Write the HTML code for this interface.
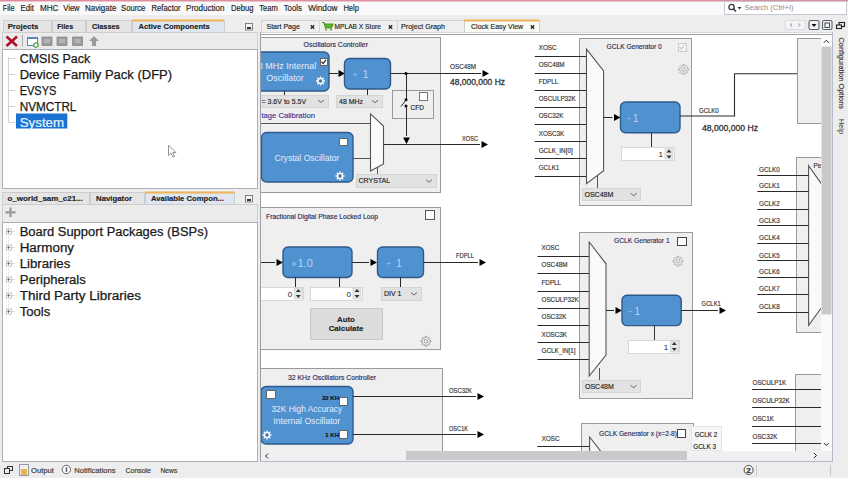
<!DOCTYPE html>
<html><head><meta charset="utf-8">
<style>
*{margin:0;padding:0}
html,body{width:848px;height:478px;overflow:hidden;background:#ededed}
svg{position:absolute;left:0;top:0;display:block}
svg text{font-family:"Liberation Sans", sans-serif}
</style></head><body>
<svg width="848" height="478" viewBox="0 0 848 478">
<rect x="0" y="0" width="848" height="478" fill="#ededed"/>
<rect x="0" y="0" width="848" height="15" fill="#f9f9f9"/>
<rect x="0" y="0" width="848" height="1.5" fill="#dd8fa0"/>
<text x="2.8" y="11" font-size="8.3" fill="#222" stroke="#222" stroke-width="0.15" text-anchor="start" font-weight="normal" textLength="11.7" lengthAdjust="spacingAndGlyphs" >File</text>
<text x="20.6" y="11" font-size="8.3" fill="#222" stroke="#222" stroke-width="0.15" text-anchor="start" font-weight="normal" textLength="13.4" lengthAdjust="spacingAndGlyphs" >Edit</text>
<text x="40" y="11" font-size="8.3" fill="#222" stroke="#222" stroke-width="0.15" text-anchor="start" font-weight="normal" textLength="18.4" lengthAdjust="spacingAndGlyphs" >MHC</text>
<text x="63.3" y="11" font-size="8.3" fill="#222" stroke="#222" stroke-width="0.15" text-anchor="start" font-weight="normal" textLength="16.3" lengthAdjust="spacingAndGlyphs" >View</text>
<text x="85" y="11" font-size="8.3" fill="#222" stroke="#222" stroke-width="0.15" text-anchor="start" font-weight="normal" textLength="31.3" lengthAdjust="spacingAndGlyphs" >Navigate</text>
<text x="121" y="11" font-size="8.3" fill="#222" stroke="#222" stroke-width="0.15" text-anchor="start" font-weight="normal" textLength="24.4" lengthAdjust="spacingAndGlyphs" >Source</text>
<text x="151.4" y="11" font-size="8.3" fill="#222" stroke="#222" stroke-width="0.15" text-anchor="start" font-weight="normal" textLength="29.3" lengthAdjust="spacingAndGlyphs" >Refactor</text>
<text x="186" y="11" font-size="8.3" fill="#222" stroke="#222" stroke-width="0.15" text-anchor="start" font-weight="normal" textLength="38.6" lengthAdjust="spacingAndGlyphs" >Production</text>
<text x="230.9" y="11" font-size="8.3" fill="#222" stroke="#222" stroke-width="0.15" text-anchor="start" font-weight="normal" textLength="22.5" lengthAdjust="spacingAndGlyphs" >Debug</text>
<text x="259.3" y="11" font-size="8.3" fill="#222" stroke="#222" stroke-width="0.15" text-anchor="start" font-weight="normal" textLength="18.5" lengthAdjust="spacingAndGlyphs" >Team</text>
<text x="283.7" y="11" font-size="8.3" fill="#222" stroke="#222" stroke-width="0.15" text-anchor="start" font-weight="normal" textLength="18.3" lengthAdjust="spacingAndGlyphs" >Tools</text>
<text x="308.2" y="11" font-size="8.3" fill="#222" stroke="#222" stroke-width="0.15" text-anchor="start" font-weight="normal" textLength="29.3" lengthAdjust="spacingAndGlyphs" >Window</text>
<text x="343.4" y="11" font-size="8.3" fill="#222" stroke="#222" stroke-width="0.15" text-anchor="start" font-weight="normal" textLength="15.6" lengthAdjust="spacingAndGlyphs" >Help</text>
<rect x="724.5" y="1.5" width="122.0" height="13.0" rx="0" fill="#fff" stroke="#c3c9d2" stroke-width="1" />
<circle cx="731.5" cy="7" r="2.6" fill="none" stroke="#333" stroke-width="1.3"/>
<line x1="733.5" y1="9" x2="736" y2="11.5" stroke="#333" stroke-width="1.5" />
<polygon points="737.5,7 741.5,7 739.5,9.5" fill="#333"/>
<text x="744.5" y="10" font-size="7.5" fill="#888"  text-anchor="start" font-weight="normal" textLength="49" lengthAdjust="spacingAndGlyphs" >Search (Ctrl+I)</text>
<rect x="2.5" y="32.5" width="255.0" height="17.0" rx="0" fill="#ebebeb" stroke="#cfcfcf" stroke-width="1" />
<rect x="3.5" y="20.5" width="48.0" height="12.0" rx="0" fill="#e4e4e4" stroke="#cdcdcd" stroke-width="1" />
<text x="7.7" y="29" font-size="7.8" fill="#222" stroke="#222" stroke-width="0.15" text-anchor="start" font-weight="bold" textLength="30.6" lengthAdjust="spacingAndGlyphs" >Projects</text>
<rect x="52.5" y="20.5" width="33.0" height="12.0" rx="0" fill="#e4e4e4" stroke="#cdcdcd" stroke-width="1" />
<text x="57.2" y="29" font-size="7.8" fill="#222" stroke="#222" stroke-width="0.15" text-anchor="start" font-weight="bold" textLength="16" lengthAdjust="spacingAndGlyphs" >Files</text>
<rect x="86.5" y="20.5" width="45.0" height="12.0" rx="0" fill="#e4e4e4" stroke="#cdcdcd" stroke-width="1" />
<text x="92" y="29" font-size="7.8" fill="#222" stroke="#222" stroke-width="0.15" text-anchor="start" font-weight="bold" textLength="27.6" lengthAdjust="spacingAndGlyphs" >Classes</text>
<rect x="132.5" y="20.5" width="92.0" height="12.0" rx="0" fill="#dfe6f2" stroke="#cdcdcd" stroke-width="1" />
<rect x="132" y="19.5" width="92" height="2.0" fill="#f0b454"/>
<text x="138.5" y="29" font-size="7.8" fill="#222" stroke="#222" stroke-width="0.15" text-anchor="start" font-weight="bold" textLength="71.3" lengthAdjust="spacingAndGlyphs" >Active Components</text>
<rect x="245.5" y="23.5" width="7.0" height="6.5" rx="0" fill="#f4f4f4" stroke="#666" stroke-width="0.8" />
<rect x="247" y="27" width="4" height="2" fill="#333"/>
<path d="M6.5,36.5 L17,46 M17,36.5 L6.5,46" stroke="#b0122c" stroke-width="2.6"/>
<line x1="22.5" y1="35" x2="22.5" y2="46.5" stroke="#aaa" stroke-width="1" />
<rect x="27.5" y="37.5" width="10.0" height="8.0" rx="0" fill="#fff" stroke="#5b86c4" stroke-width="1" />
<rect x="27.5" y="37" width="9.5" height="2" fill="#5b86c4"/>
<circle cx="36" cy="45" r="2.2" fill="#fff" stroke="#3c9a3c" stroke-width="1.1"/>
<rect x="42" y="37" width="10" height="8.5" rx="0" fill="#9a9a9a" stroke="#8a8a8a" stroke-width="0.8" />
<rect x="44" y="39" width="6" height="4" fill="#b4b4b4"/>
<rect x="57" y="37" width="10" height="8.5" rx="0" fill="#9a9a9a" stroke="#8a8a8a" stroke-width="0.8" />
<rect x="59" y="39" width="6" height="4" fill="#b4b4b4"/>
<rect x="72.6" y="37" width="10.0" height="8.5" rx="0" fill="#9a9a9a" stroke="#8a8a8a" stroke-width="0.8" />
<rect x="74.6" y="39" width="6.0" height="4" fill="#b4b4b4"/>
<polygon points="94,36 99,41 96,41 96,46 92,46 92,41 89,41" fill="#9a9a9a"/>
<rect x="2.5" y="49.5" width="255.0" height="139.0" rx="0" fill="#fff" stroke="#a9b0b8" stroke-width="1" />
<line x1="8.5" y1="57" x2="8.5" y2="122" stroke="#d0d0d0" stroke-width="1" />
<line x1="8.5" y1="58.5" x2="15.5" y2="58.5" stroke="#c8c8c8" stroke-width="0.8" />
<text x="19.7" y="62.5" font-size="12" fill="#1a1a1a" stroke="#1a1a1a" stroke-width="0.25" text-anchor="start" font-weight="normal" textLength="70.5" lengthAdjust="spacingAndGlyphs" >CMSIS Pack</text>
<line x1="8.5" y1="74.5" x2="15.5" y2="74.5" stroke="#c8c8c8" stroke-width="0.8" />
<text x="19.7" y="78.5" font-size="12" fill="#1a1a1a" stroke="#1a1a1a" stroke-width="0.25" text-anchor="start" font-weight="normal" textLength="152.4" lengthAdjust="spacingAndGlyphs" >Device Family Pack (DFP)</text>
<line x1="8.5" y1="90.5" x2="15.5" y2="90.5" stroke="#c8c8c8" stroke-width="0.8" />
<text x="19.7" y="94.5" font-size="12" fill="#1a1a1a" stroke="#1a1a1a" stroke-width="0.25" text-anchor="start" font-weight="normal" textLength="36.7" lengthAdjust="spacingAndGlyphs" >EVSYS</text>
<line x1="8.5" y1="106.5" x2="15.5" y2="106.5" stroke="#c8c8c8" stroke-width="0.8" />
<text x="19.7" y="110.5" font-size="12" fill="#1a1a1a" stroke="#1a1a1a" stroke-width="0.25" text-anchor="start" font-weight="normal" textLength="56.7" lengthAdjust="spacingAndGlyphs" >NVMCTRL</text>
<line x1="8.5" y1="122.5" x2="15.5" y2="122.5" stroke="#c8c8c8" stroke-width="0.8" />
<rect x="16" y="113.5" width="51.3" height="15.0" fill="#1a72d2"/>
<polygon points="168.5,145 168.5,155.5 171,153.2 173,157.2 174.6,156.4 172.7,152.6 176,152.6" fill="#fff" stroke="#8a8a8a" stroke-width="0.9"/>
<text x="19.7" y="126.5" font-size="12" fill="#e8f6ff" stroke="#e8f6ff" stroke-width="0.2" text-anchor="start" font-weight="normal" textLength="44.4" lengthAdjust="spacingAndGlyphs" >System</text>
<rect x="2.5" y="204.5" width="255.0" height="18.0" rx="0" fill="#ebebeb" stroke="#cfcfcf" stroke-width="1" />
<rect x="2.5" y="192.5" width="87.0" height="12.0" rx="0" fill="#e4e4e4" stroke="#cdcdcd" stroke-width="1" />
<text x="7.4" y="201" font-size="7.8" fill="#222" stroke="#222" stroke-width="0.15" text-anchor="start" font-weight="bold" textLength="75.4" lengthAdjust="spacingAndGlyphs" >o_world_sam_c21...</text>
<rect x="90.5" y="192.5" width="54.0" height="12.0" rx="0" fill="#e4e4e4" stroke="#cdcdcd" stroke-width="1" />
<text x="96" y="201" font-size="7.8" fill="#222" stroke="#222" stroke-width="0.15" text-anchor="start" font-weight="bold" textLength="36" lengthAdjust="spacingAndGlyphs" >Navigator</text>
<rect x="145.5" y="192.5" width="89.0" height="12.0" rx="0" fill="#dfe6f2" stroke="#cdcdcd" stroke-width="1" />
<rect x="145" y="191.5" width="89.5" height="2.0" fill="#f0b454"/>
<text x="151" y="201" font-size="7.8" fill="#222" stroke="#222" stroke-width="0.15" text-anchor="start" font-weight="bold" textLength="73" lengthAdjust="spacingAndGlyphs" >Available Compon...</text>
<rect x="245.5" y="195.5" width="7.0" height="6.5" rx="0" fill="#f4f4f4" stroke="#666" stroke-width="0.8" />
<rect x="247" y="199" width="4" height="2" fill="#333"/>
<path d="M10.5,207.5 V217 M5.5,212.3 H15.5" stroke="#999" stroke-width="2.2"/>
<rect x="2.5" y="222.5" width="255.0" height="239.0" rx="0" fill="#fff" stroke="#a9b0b8" stroke-width="1" />
<line x1="8.5" y1="226" x2="8.5" y2="311" stroke="#cfcfcf" stroke-width="0.8" stroke-dasharray="1 1"/>
<rect x="6.3" y="229" width="5.000000000000001" height="5" rx="0" fill="#fff" stroke="#aaa" stroke-width="0.7" />
<line x1="7.3" y1="231.5" x2="10.3" y2="231.5" stroke="#555" stroke-width="0.7" />
<line x1="8.5" y1="230" x2="8.5" y2="233" stroke="#555" stroke-width="0.7" />
<line x1="11.3" y1="231.5" x2="15" y2="231.5" stroke="#ccc" stroke-width="0.7" />
<text x="19.7" y="236" font-size="12" fill="#1a1a1a" stroke="#1a1a1a" stroke-width="0.25" text-anchor="start" font-weight="normal" textLength="188.3" lengthAdjust="spacingAndGlyphs" >Board Support Packages (BSPs)</text>
<rect x="6.3" y="245" width="5.000000000000001" height="5" rx="0" fill="#fff" stroke="#aaa" stroke-width="0.7" />
<line x1="7.3" y1="247.5" x2="10.3" y2="247.5" stroke="#555" stroke-width="0.7" />
<line x1="8.5" y1="246" x2="8.5" y2="249" stroke="#555" stroke-width="0.7" />
<line x1="11.3" y1="247.5" x2="15" y2="247.5" stroke="#ccc" stroke-width="0.7" />
<text x="19.7" y="252" font-size="12" fill="#1a1a1a" stroke="#1a1a1a" stroke-width="0.25" text-anchor="start" font-weight="normal" textLength="54.4" lengthAdjust="spacingAndGlyphs" >Harmony</text>
<rect x="6.3" y="261" width="5.000000000000001" height="5" rx="0" fill="#fff" stroke="#aaa" stroke-width="0.7" />
<line x1="7.3" y1="263.5" x2="10.3" y2="263.5" stroke="#555" stroke-width="0.7" />
<line x1="8.5" y1="262" x2="8.5" y2="265" stroke="#555" stroke-width="0.7" />
<line x1="11.3" y1="263.5" x2="15" y2="263.5" stroke="#ccc" stroke-width="0.7" />
<text x="19.7" y="268" font-size="12" fill="#1a1a1a" stroke="#1a1a1a" stroke-width="0.25" text-anchor="start" font-weight="normal" textLength="50.6" lengthAdjust="spacingAndGlyphs" >Libraries</text>
<rect x="6.3" y="277" width="5.000000000000001" height="5" rx="0" fill="#fff" stroke="#aaa" stroke-width="0.7" />
<line x1="7.3" y1="279.5" x2="10.3" y2="279.5" stroke="#555" stroke-width="0.7" />
<line x1="8.5" y1="278" x2="8.5" y2="281" stroke="#555" stroke-width="0.7" />
<line x1="11.3" y1="279.5" x2="15" y2="279.5" stroke="#ccc" stroke-width="0.7" />
<text x="19.7" y="284" font-size="12" fill="#1a1a1a" stroke="#1a1a1a" stroke-width="0.25" text-anchor="start" font-weight="normal" textLength="66" lengthAdjust="spacingAndGlyphs" >Peripherals</text>
<rect x="6.3" y="293" width="5.000000000000001" height="5" rx="0" fill="#fff" stroke="#aaa" stroke-width="0.7" />
<line x1="7.3" y1="295.5" x2="10.3" y2="295.5" stroke="#555" stroke-width="0.7" />
<line x1="8.5" y1="294" x2="8.5" y2="297" stroke="#555" stroke-width="0.7" />
<line x1="11.3" y1="295.5" x2="15" y2="295.5" stroke="#ccc" stroke-width="0.7" />
<text x="19.7" y="300" font-size="12" fill="#1a1a1a" stroke="#1a1a1a" stroke-width="0.25" text-anchor="start" font-weight="normal" textLength="121.3" lengthAdjust="spacingAndGlyphs" >Third Party Libraries</text>
<rect x="6.3" y="309" width="5.000000000000001" height="5" rx="0" fill="#fff" stroke="#aaa" stroke-width="0.7" />
<line x1="7.3" y1="311.5" x2="10.3" y2="311.5" stroke="#555" stroke-width="0.7" />
<line x1="8.5" y1="310" x2="8.5" y2="313" stroke="#555" stroke-width="0.7" />
<line x1="11.3" y1="311.5" x2="15" y2="311.5" stroke="#ccc" stroke-width="0.7" />
<text x="19.7" y="316" font-size="12" fill="#1a1a1a" stroke="#1a1a1a" stroke-width="0.25" text-anchor="start" font-weight="normal" textLength="30.5" lengthAdjust="spacingAndGlyphs" >Tools</text>
<rect x="7.5" y="466.5" width="5.0" height="4.0" rx="0" fill="none" stroke="#333" stroke-width="1" />
<rect x="4.5" y="468.5" width="5.0" height="5.0" rx="0" fill="#ededed" stroke="#333" stroke-width="1" />
<rect x="19.5" y="464.5" width="9.0" height="11.0" rx="0" fill="#f0f0f0" stroke="#8a8fa0" stroke-width="0.9" />
<rect x="21" y="469" width="6" height="6" fill="#e6b550"/>
<text x="31" y="473" font-size="7.6" fill="#333" stroke="#333" stroke-width="0.15" text-anchor="start" font-weight="normal" textLength="22.8" lengthAdjust="spacingAndGlyphs" >Output</text>
<circle cx="66.3" cy="469.5" r="4.2" fill="#fafafa" stroke="#555" stroke-width="0.9"/>
<text x="65.5" y="472.3" font-size="6.5" fill="#333" stroke="#333" stroke-width="0.15" text-anchor="start" font-weight="bold" textLength="1.8" lengthAdjust="spacingAndGlyphs" >i</text>
<text x="74.3" y="473" font-size="7.6" fill="#333" stroke="#333" stroke-width="0.15" text-anchor="start" font-weight="normal" textLength="41.3" lengthAdjust="spacingAndGlyphs" >Notifications</text>
<text x="125.5" y="473" font-size="7.6" fill="#333" stroke="#333" stroke-width="0.15" text-anchor="start" font-weight="normal" textLength="25.5" lengthAdjust="spacingAndGlyphs" >Console</text>
<text x="160.4" y="473" font-size="7.6" fill="#333" stroke="#333" stroke-width="0.15" text-anchor="start" font-weight="normal" textLength="17" lengthAdjust="spacingAndGlyphs" >News</text>
<circle cx="748.6" cy="470" r="4.5" fill="#fff" stroke="#444" stroke-width="1"/>
<text x="746.3" y="472.8" font-size="7" fill="#222" stroke="#222" stroke-width="0.15" text-anchor="start" font-weight="bold" textLength="4.6" lengthAdjust="spacingAndGlyphs" >2</text>
<line x1="756.5" y1="465" x2="756.5" y2="476" stroke="#bbb" stroke-width="0.8" />
<line x1="830.5" y1="465" x2="830.5" y2="476" stroke="#bbb" stroke-width="0.8" />
<rect x="261.5" y="20.5" width="58.0" height="12.0" rx="0" fill="#efefef" stroke="#d2d2d2" stroke-width="1" />
<text x="266.4" y="29" font-size="7.2" fill="#222" stroke="#222" stroke-width="0.15" text-anchor="start" font-weight="normal" textLength="33.6" lengthAdjust="spacingAndGlyphs" >Start Page</text>
<path d="M310.8,25.3 L314.2,28.7 M314.2,25.3 L310.8,28.7" stroke="#222" stroke-width="1.3"/>
<rect x="319.5" y="20.5" width="78.0" height="12.0" rx="0" fill="#efefef" stroke="#d2d2d2" stroke-width="1" />
<text x="334.5" y="29" font-size="7.2" fill="#222" stroke="#222" stroke-width="0.15" text-anchor="start" font-weight="normal" textLength="46.5" lengthAdjust="spacingAndGlyphs" >MPLAB X Store</text>
<path d="M388.8,25.3 L392.2,28.7 M392.2,25.3 L388.8,28.7" stroke="#222" stroke-width="1.3"/>
<path d="M322,22.5 L324,22.5 L325.5,28 L331.5,28 L333,24 L324.5,24" fill="#5cb031" stroke="#4a9a22" stroke-width="1.2"/>
<circle cx="326" cy="29.7" r="0.9" fill="#4a9a22"/><circle cx="331" cy="29.7" r="0.9" fill="#4a9a22"/>
<rect x="397.5" y="20.5" width="67.0" height="12.0" rx="0" fill="#efefef" stroke="#d2d2d2" stroke-width="1" />
<text x="401" y="29" font-size="7.2" fill="#222" stroke="#222" stroke-width="0.15" text-anchor="start" font-weight="normal" textLength="44" lengthAdjust="spacingAndGlyphs" >Project Graph</text>
<rect x="464.5" y="20.5" width="75.0" height="12.0" rx="0" fill="#fbfbf6" stroke="#cfcfcf" stroke-width="1" />
<rect x="464" y="19.5" width="75" height="2.0" fill="#f0b454"/>
<text x="471" y="29" font-size="7.2" fill="#222" stroke="#222" stroke-width="0.15" text-anchor="start" font-weight="normal" textLength="52.2" lengthAdjust="spacingAndGlyphs" >Clock Easy View</text>
<path d="M530.8,25.3 L534.2,28.7 M534.2,25.3 L530.8,28.7" stroke="#222" stroke-width="1.3"/>
<rect x="785" y="20.5" width="20" height="9.0" rx="0" fill="#f2f4f6" stroke="#d2d8de" stroke-width="0.8" />
<polygon points="789.5,25 792,22.8 792,27.2" fill="#bbb"/><polygon points="801,25 798.5,22.8 798.5,27.2" fill="#bbb"/>
<rect x="809" y="20.5" width="10" height="9.0" rx="1.5" fill="#f4f4f4" stroke="#56606a" stroke-width="1.1" />
<polygon points="811.5,24 816.5,24 814,27" fill="#111"/>
<rect x="822.5" y="20.5" width="9.5" height="9.0" rx="1.5" fill="#f4f4f4" stroke="#56606a" stroke-width="1.1" />
<rect x="825" y="23" width="4.5" height="4.5" rx="0" fill="none" stroke="#333" stroke-width="0.9" />
<rect x="839" y="22.5" width="5.5" height="4.0" rx="0" fill="none" stroke="#222" stroke-width="1.1" />
<rect x="836.5" y="25" width="5.0" height="3.5" rx="0" fill="#ededed" stroke="#222" stroke-width="1.1" />
<rect x="260.5" y="32.5" width="572.0" height="429.0" rx="0" fill="#fff" stroke="#b4bccb" stroke-width="1" />
<line x1="261" y1="32.5" x2="832" y2="32.5" stroke="#d4dae2" stroke-width="1" />
<line x1="261" y1="34.5" x2="832" y2="34.5" stroke="#a0a0a0" stroke-width="1" />
<line x1="260.5" y1="32" x2="260.5" y2="461" stroke="#9aa0a8" stroke-width="1" />
<defs><clipPath id="cv"><rect x="261" y="35" width="560" height="416"/></clipPath></defs>
<g clip-path="url(#cv)">
<rect x="240.5" y="37.5" width="200.0" height="155.0" rx="0" fill="#efefef" stroke="#999" stroke-width="1" />
<text x="303.5" y="46.5" font-size="7" fill="#2b2d5a" stroke="#2b2d5a" stroke-width="0.15" text-anchor="start" font-weight="normal" textLength="64.5" lengthAdjust="spacingAndGlyphs" >Oscillators Controller</text>
<rect x="240" y="52" width="89" height="39" rx="5" fill="#5091d0" stroke="#2f5b8a" stroke-width="1.4" />
<text x="287" y="69" font-size="9" fill="#e4eef9"  text-anchor="middle" font-weight="normal" >8 MHz Internal</text>
<text x="285" y="80.5" font-size="9" fill="#e4eef9"  text-anchor="middle" font-weight="normal" >Oscillator</text>
<rect x="320.5" y="58.5" width="7.0" height="7.0" rx="0" fill="#fff" stroke="#666" stroke-width="1" />
<polyline points="321.5,61.75 323.2,63.5 326.0,59.8" fill="none" stroke="#333" stroke-width="1.3"/>
<path d="M323.74,80.30 L325.05,80.31 L325.05,81.69 L323.74,81.70 L323.29,82.79 L324.20,83.73 L323.23,84.70 L322.29,83.79 L321.20,84.24 L321.19,85.55 L319.81,85.55 L319.80,84.24 L318.71,83.79 L317.77,84.70 L316.80,83.73 L317.71,82.79 L317.26,81.70 L315.95,81.69 L315.95,80.31 L317.26,80.30 L317.71,79.21 L316.80,78.27 L317.77,77.30 L318.71,78.21 L319.80,77.76 L319.81,76.45 L321.19,76.45 L321.20,77.76 L322.29,78.21 L323.23,77.30 L324.20,78.27 L323.29,79.21 Z" fill="#f4f8fc"/>
<circle cx="320.5" cy="81" r="1.656" fill="#3f6f9f"/>
<line x1="329" y1="73.5" x2="338" y2="73.5" stroke="#2a2a2a" stroke-width="1.0" />
<polygon points="345,73.5 338.5,70.1 338.5,76.9" fill="#000"/>
<rect x="344.5" y="58.5" width="46.0" height="30.5" rx="5" fill="#5091d0" stroke="#2f5b8a" stroke-width="1.4" />
<text x="352.5" y="77.5" font-size="9" fill="#a8cff5"  text-anchor="start" font-weight="normal" >÷</text>
<text x="362.5" y="77.5" font-size="11" fill="#b4d6f8"  text-anchor="start" font-weight="normal" >1</text>
<line x1="284.5" y1="91" x2="284.5" y2="95" stroke="#2a2a2a" stroke-width="1" />
<line x1="367.5" y1="89" x2="367.5" y2="95" stroke="#2a2a2a" stroke-width="1" />
<rect x="250.5" y="95.5" width="78.0" height="12.0" rx="0" fill="#e2e2e2" stroke="#d4d4d4" stroke-width="1" />
<text x="261.5" y="103.5" font-size="7" fill="#222" stroke="#222" stroke-width="0.15" text-anchor="start" font-weight="normal" >= 3.6V to 5.5V</text>
<polyline points="318,100.0 321,102.5 324,100.0" fill="none" stroke="#555" stroke-width="0.9"/>
<rect x="336.5" y="95.5" width="46.0" height="12.0" rx="0" fill="#e2e2e2" stroke="#d4d4d4" stroke-width="1" />
<text x="339.0" y="103.75" font-size="7" fill="#222" stroke="#222" stroke-width="0.15" text-anchor="start" font-weight="normal" >48 MHz</text>
<polyline points="372,100.25 375,102.75 378,100.25" fill="none" stroke="#555" stroke-width="0.9"/>
<text x="261.4" y="117.5" font-size="8" fill="#3a3a9a" stroke="#3a3a9a" stroke-width="0.15" text-anchor="start" font-weight="normal" textLength="53.5" lengthAdjust="spacingAndGlyphs" >tage Calibration</text>
<line x1="240" y1="123.5" x2="370.5" y2="123.5" stroke="#555" stroke-width="1.0" />
<rect x="392.5" y="90.5" width="41.0" height="28.0" rx="0" fill="#efefef" stroke="#999" stroke-width="1" />
<rect x="419.5" y="92.5" width="8.0" height="8.0" rx="0" fill="#fff" stroke="#777" stroke-width="1" />
<text x="410.5" y="110" font-size="6.5" fill="#222" stroke="#222" stroke-width="0.15" text-anchor="start" font-weight="normal" >CFD</text>
<rect x="261.5" y="132.5" width="91.5" height="49.5" rx="5" fill="#5091d0" stroke="#2f5b8a" stroke-width="1.4" />
<text x="307" y="161" font-size="8.6" fill="#e4eef9"  text-anchor="middle" font-weight="normal" >Crystal Oscillator</text>
<rect x="339.5" y="138.5" width="8.0" height="7.0" rx="0" fill="#fff" stroke="#666" stroke-width="1" />
<path d="M343.24,175.30 L344.55,175.31 L344.55,176.69 L343.24,176.70 L342.79,177.79 L343.70,178.73 L342.73,179.70 L341.79,178.79 L340.70,179.24 L340.69,180.55 L339.31,180.55 L339.30,179.24 L338.21,178.79 L337.27,179.70 L336.30,178.73 L337.21,177.79 L336.76,176.70 L335.45,176.69 L335.45,175.31 L336.76,175.30 L337.21,174.21 L336.30,173.27 L337.27,172.30 L338.21,173.21 L339.30,172.76 L339.31,171.45 L340.69,171.45 L340.70,172.76 L341.79,173.21 L342.73,172.30 L343.70,173.27 L342.79,174.21 Z" fill="#f4f8fc"/>
<circle cx="340" cy="176" r="1.656" fill="#3f6f9f"/>
<line x1="353" y1="158.5" x2="370.5" y2="158.5" stroke="#555" stroke-width="1.0" />
<polygon points="370.5,113.8 383.5,126 383.5,164 370.5,171" fill="#fafafa" stroke="#555" stroke-width="1.1"/>
<line x1="377.5" y1="167.5" x2="377.5" y2="174" stroke="#555" stroke-width="1.0" />
<rect x="356.5" y="174.5" width="80.0" height="13.0" rx="0" fill="#e2e2e2" stroke="#d4d4d4" stroke-width="1" />
<text x="358.5" y="183.25" font-size="7" fill="#222" stroke="#222" stroke-width="0.15" text-anchor="start" font-weight="normal" >CRYSTAL</text>
<polyline points="426,179.75 429,182.25 432,179.75" fill="none" stroke="#555" stroke-width="0.9"/>
<line x1="390.5" y1="73.5" x2="481" y2="73.5" stroke="#2a2a2a" stroke-width="1.0" />
<polygon points="489,73.5 482.5,70.1 482.5,76.9" fill="#000"/>
<circle cx="406" cy="73.5" r="1.6" fill="#000"/>
<line x1="406.5" y1="73.5" x2="406.5" y2="99.8" stroke="#2a2a2a" stroke-width="1.0" />
<circle cx="406" cy="99.8" r="1.5" fill="#000"/><circle cx="406" cy="106" r="1.5" fill="#000"/>
<line x1="401" y1="106.5" x2="406" y2="100" stroke="#2a2a2a" stroke-width="1.0" />
<line x1="406.5" y1="106" x2="406.5" y2="136" stroke="#2a2a2a" stroke-width="1.0" />
<polygon points="406.5,144 403.1,137.5 409.9,137.5" fill="#000"/>
<line x1="383.5" y1="144.5" x2="480" y2="144.5" stroke="#2a2a2a" stroke-width="1.0" />
<polygon points="488,144.5 481.5,141.1 481.5,147.9" fill="#000"/>
<text x="450" y="68.5" font-size="6.5" fill="#333" stroke="#333" stroke-width="0.15" text-anchor="start" font-weight="normal" textLength="26" lengthAdjust="spacingAndGlyphs" >OSC48M</text>
<text x="450" y="85" font-size="8.5" fill="#333" stroke="#333" stroke-width="0.3" text-anchor="start" font-weight="normal" textLength="55" lengthAdjust="spacingAndGlyphs" >48,000,000 Hz</text>
<text x="462" y="140.5" font-size="6.5" fill="#333" stroke="#333" stroke-width="0.15" text-anchor="start" font-weight="normal" textLength="16" lengthAdjust="spacingAndGlyphs" >XOSC</text>
<rect x="240.5" y="207.5" width="200.0" height="142.0" rx="0" fill="#efefef" stroke="#9a9a9a" stroke-width="1" />
<text x="266" y="218.5" font-size="7" fill="#2b2d5a" stroke="#2b2d5a" stroke-width="0.15" text-anchor="start" font-weight="normal" textLength="112" lengthAdjust="spacingAndGlyphs" >Fractional Digital Phase Locked Loop</text>
<rect x="425.5" y="210.5" width="9.0" height="9.0" rx="0" fill="#fff" stroke="#555" stroke-width="1" />
<line x1="240" y1="262.5" x2="275" y2="262.5" stroke="#2a2a2a" stroke-width="1.0" />
<polygon points="283,262.5 276.5,259.1 276.5,265.9" fill="#000"/>
<rect x="283" y="247" width="69" height="30.5" rx="5" fill="#5091d0" stroke="#2f5b8a" stroke-width="1.4" />
<text x="291.5" y="266.5" font-size="9" fill="#a8cff5"  text-anchor="start" font-weight="normal" >×</text>
<text x="297.5" y="266.5" font-size="11" fill="#b4d6f8"  text-anchor="start" font-weight="normal" >1.0</text>
<line x1="352" y1="262.5" x2="369" y2="262.5" stroke="#2a2a2a" stroke-width="1.0" />
<polygon points="377,262.5 370.5,259.1 370.5,265.9" fill="#000"/>
<rect x="377.5" y="247" width="46.0" height="30.5" rx="5" fill="#5091d0" stroke="#2f5b8a" stroke-width="1.4" />
<text x="386" y="266.5" font-size="9" fill="#a8cff5"  text-anchor="start" font-weight="normal" >÷</text>
<text x="396" y="266.5" font-size="11" fill="#b4d6f8"  text-anchor="start" font-weight="normal" >1</text>
<line x1="423.5" y1="262.5" x2="478" y2="262.5" stroke="#2a2a2a" stroke-width="1.0" />
<polygon points="486,262.5 479.5,259.1 479.5,265.9" fill="#000"/>
<text x="456" y="258" font-size="6.5" fill="#333" stroke="#333" stroke-width="0.15" text-anchor="start" font-weight="normal" textLength="18" lengthAdjust="spacingAndGlyphs" >FDPLL</text>
<line x1="295.5" y1="277.5" x2="295.5" y2="287" stroke="#2a2a2a" stroke-width="1" />
<line x1="339.5" y1="277.5" x2="339.5" y2="287" stroke="#2a2a2a" stroke-width="1" />
<line x1="400.5" y1="277.5" x2="400.5" y2="287" stroke="#2a2a2a" stroke-width="1" />
<rect x="250.5" y="287.5" width="53.0" height="13.0" rx="0" fill="#fff" stroke="#d8d8d8" stroke-width="1" />
<rect x="294.3" y="288" width="8.0" height="11" rx="0" fill="#e6e6e6" stroke="#c8c8c8" stroke-width="0.6" />
<polygon points="298.3,289.0 295.8,292.0 300.8,292.0" fill="#333"/>
<polygon points="298.3,298.0 295.8,295.0 300.8,295.0" fill="#333"/>
<text x="292.3" y="296.5" font-size="8" fill="#222"  text-anchor="end" font-weight="normal" >0</text>
<rect x="310.5" y="287.5" width="52.0" height="13.0" rx="0" fill="#fff" stroke="#d8d8d8" stroke-width="1" />
<rect x="353" y="288" width="8" height="11" rx="0" fill="#e6e6e6" stroke="#c8c8c8" stroke-width="0.6" />
<polygon points="357,289.0 354.5,292.0 359.5,292.0" fill="#333"/>
<polygon points="357,298.0 354.5,295.0 359.5,295.0" fill="#333"/>
<text x="351" y="296.5" font-size="8" fill="#222"  text-anchor="end" font-weight="normal" >0</text>
<rect x="381.5" y="287.5" width="40.0" height="13.0" rx="0" fill="#e2e2e2" stroke="#d4d4d4" stroke-width="1" />
<text x="384.0" y="296.0" font-size="7" fill="#222" stroke="#222" stroke-width="0.15" text-anchor="start" font-weight="normal" >DIV 1</text>
<polyline points="411,292.5 414,295.0 417,292.5" fill="none" stroke="#555" stroke-width="0.9"/>
<rect x="310.5" y="308.5" width="72.0" height="31.0" rx="0" fill="#dcdcdc" stroke="#c8c8c8" stroke-width="1" />
<text x="346" y="322" font-size="7.8" fill="#222" stroke="#222" stroke-width="0.15" text-anchor="middle" font-weight="bold" >Auto</text>
<text x="346" y="330.5" font-size="7.8" fill="#222" stroke="#222" stroke-width="0.15" text-anchor="middle" font-weight="bold" >Calculate</text>
<path d="M429.52,340.52 L430.84,340.55 L430.84,342.05 L429.52,342.08 L429.01,343.30 L429.93,344.26 L428.86,345.33 L427.90,344.41 L426.68,344.92 L426.65,346.24 L425.15,346.24 L425.12,344.92 L423.90,344.41 L422.94,345.33 L421.87,344.26 L422.79,343.30 L422.28,342.08 L420.96,342.05 L420.96,340.55 L422.28,340.52 L422.79,339.30 L421.87,338.34 L422.94,337.27 L423.90,338.19 L425.12,337.68 L425.15,336.36 L426.65,336.36 L426.68,337.68 L427.90,338.19 L428.86,337.27 L429.93,338.34 L429.01,339.30 Z" fill="none" stroke="#999" stroke-width="0.9"/>
<circle cx="425.9" cy="341.3" r="1.7999999999999998" fill="none" stroke="#999" stroke-width="0.9"/>
<rect x="240.5" y="368.5" width="202.0" height="102.0" rx="0" fill="#efefef" stroke="#9a9a9a" stroke-width="1" />
<text x="288" y="380" font-size="7" fill="#2b2d5a" stroke="#2b2d5a" stroke-width="0.15" text-anchor="start" font-weight="normal" textLength="88" lengthAdjust="spacingAndGlyphs" >32 KHz Oscillators Controller</text>
<rect x="261" y="386.5" width="92" height="57.5" rx="5" fill="#5091d0" stroke="#2f5b8a" stroke-width="1.4" />
<rect x="266.5" y="390.5" width="9.0" height="8.0" rx="0" fill="#fff" stroke="#666" stroke-width="1" />
<text x="339" y="399.5" font-size="6" fill="#111" stroke="#111" stroke-width="0.15" text-anchor="end" font-weight="bold" >32 KH</text>
<rect x="339.5" y="397.5" width="8.0" height="8.0" rx="0" fill="#fff" stroke="#666" stroke-width="1" />
<text x="306.8" y="412" font-size="8.4" fill="#e4eef9"  text-anchor="middle" font-weight="normal" >32K High Accuracy</text>
<text x="306.8" y="424" font-size="8.6" fill="#e4eef9"  text-anchor="middle" font-weight="normal" >Internal Oscillator</text>
<path d="M270.24,434.30 L271.55,434.31 L271.55,435.69 L270.24,435.70 L269.79,436.79 L270.70,437.73 L269.73,438.70 L268.79,437.79 L267.70,438.24 L267.69,439.55 L266.31,439.55 L266.30,438.24 L265.21,437.79 L264.27,438.70 L263.30,437.73 L264.21,436.79 L263.76,435.70 L262.45,435.69 L262.45,434.31 L263.76,434.30 L264.21,433.21 L263.30,432.27 L264.27,431.30 L265.21,432.21 L266.30,431.76 L266.31,430.45 L267.69,430.45 L267.70,431.76 L268.79,432.21 L269.73,431.30 L270.70,432.27 L269.79,433.21 Z" fill="#f4f8fc"/>
<circle cx="267" cy="435" r="1.656" fill="#3f6f9f"/>
<text x="339" y="437" font-size="6" fill="#111" stroke="#111" stroke-width="0.15" text-anchor="end" font-weight="bold" >1 KH</text>
<rect x="339.5" y="430.5" width="8.0" height="8.0" rx="0" fill="#fff" stroke="#666" stroke-width="1" />
<line x1="353" y1="396.5" x2="476" y2="396.5" stroke="#2a2a2a" stroke-width="1.0" />
<polygon points="484,396.5 477.5,393.1 477.5,399.9" fill="#000"/>
<line x1="353" y1="434.5" x2="476" y2="434.5" stroke="#2a2a2a" stroke-width="1.0" />
<polygon points="484,434.5 477.5,431.1 477.5,437.9" fill="#000"/>
<text x="449" y="392.5" font-size="6.5" fill="#333" stroke="#333" stroke-width="0.15" text-anchor="start" font-weight="normal" textLength="23" lengthAdjust="spacingAndGlyphs" >OSC32K</text>
<text x="449" y="431" font-size="6.5" fill="#333" stroke="#333" stroke-width="0.15" text-anchor="start" font-weight="normal" textLength="19" lengthAdjust="spacingAndGlyphs" >OSC1K</text>
<rect x="579.5" y="38.5" width="112.0" height="167.0" rx="0" fill="#efefef" stroke="#9a9a9a" stroke-width="1" />
<text x="606.6" y="49.2" font-size="7" fill="#2b2d5a" stroke="#2b2d5a" stroke-width="0.15" text-anchor="start" font-weight="normal" textLength="55" lengthAdjust="spacingAndGlyphs" >GCLK Generator 0</text>
<line x1="534.7" y1="56.5" x2="586.5" y2="56.5" stroke="#2a2a2a" stroke-width="1.0" />
<text x="538.7" y="50" font-size="6.3" fill="#333" stroke="#333" stroke-width="0.15" text-anchor="start" font-weight="normal" >XOSC</text>
<line x1="534.7" y1="73.5" x2="586.5" y2="73.5" stroke="#2a2a2a" stroke-width="1.0" />
<text x="538.7" y="67" font-size="6.3" fill="#333" stroke="#333" stroke-width="0.15" text-anchor="start" font-weight="normal" >OSC48M</text>
<line x1="534.7" y1="90.5" x2="586.5" y2="90.5" stroke="#2a2a2a" stroke-width="1.0" />
<text x="538.7" y="84" font-size="6.3" fill="#333" stroke="#333" stroke-width="0.15" text-anchor="start" font-weight="normal" >FDPLL</text>
<line x1="534.7" y1="107.5" x2="586.5" y2="107.5" stroke="#2a2a2a" stroke-width="1.0" />
<text x="538.7" y="101" font-size="6.3" fill="#333" stroke="#333" stroke-width="0.15" text-anchor="start" font-weight="normal" >OSCULP32K</text>
<line x1="534.7" y1="124.5" x2="586.5" y2="124.5" stroke="#2a2a2a" stroke-width="1.0" />
<text x="538.7" y="118" font-size="6.3" fill="#333" stroke="#333" stroke-width="0.15" text-anchor="start" font-weight="normal" >OSC32K</text>
<line x1="534.7" y1="141.5" x2="586.5" y2="141.5" stroke="#2a2a2a" stroke-width="1.0" />
<text x="538.7" y="135.5" font-size="6.3" fill="#333" stroke="#333" stroke-width="0.15" text-anchor="start" font-weight="normal" >XOSC3K</text>
<line x1="534.7" y1="158.5" x2="586.5" y2="158.5" stroke="#2a2a2a" stroke-width="1.0" />
<text x="538.7" y="152.5" font-size="6.3" fill="#333" stroke="#333" stroke-width="0.15" text-anchor="start" font-weight="normal" >GCLK_IN[0]</text>
<line x1="534.7" y1="176.5" x2="586.5" y2="176.5" stroke="#2a2a2a" stroke-width="1.0" />
<text x="538.7" y="170" font-size="6.3" fill="#333" stroke="#333" stroke-width="0.15" text-anchor="start" font-weight="normal" >GCLK1</text>
<polygon points="586.5,49.2 603.6,71 603.6,170.7 586.5,183.6" fill="#fafafa" stroke="#555" stroke-width="1.1"/>
<line x1="597.5" y1="175.6" x2="597.5" y2="188" stroke="#555" stroke-width="1.0" />
<rect x="582.5" y="188.5" width="58.0" height="12.0" rx="0" fill="#e2e2e2" stroke="#d4d4d4" stroke-width="1" />
<text x="584.5" y="196.75" font-size="7" fill="#222" stroke="#222" stroke-width="0.15" text-anchor="start" font-weight="normal" >OSC48M</text>
<polyline points="630.7,193.25 633.7,195.75 636.7,193.25" fill="none" stroke="#555" stroke-width="0.9"/>
<line x1="603.6" y1="117.5" x2="612.5" y2="117.5" stroke="#2a2a2a" stroke-width="1.0" />
<polygon points="620.5,117.5 614.0,114.1 614.0,120.9" fill="#000"/>
<rect x="620.5" y="102" width="59.5" height="30.69999999999999" rx="5" fill="#5091d0" stroke="#2f5b8a" stroke-width="1.4" />
<text x="626.5" y="121" font-size="8" fill="#a8cff5"  text-anchor="start" font-weight="normal" >÷</text>
<text x="633.0" y="121.5" font-size="10" fill="#b4d6f8"  text-anchor="start" font-weight="normal" >1</text>
<line x1="651.5" y1="132.7" x2="651.5" y2="147.8" stroke="#333" stroke-width="1.0" />
<rect x="621.5" y="147.5" width="53.0" height="13.0" rx="0" fill="#fff" stroke="#d8d8d8" stroke-width="1" />
<rect x="665" y="148.8" width="8" height="10.199999999999989" rx="0" fill="#e6e6e6" stroke="#c8c8c8" stroke-width="0.6" />
<polygon points="669,149.4 666.5,152.4 671.5,152.4" fill="#333"/>
<polygon points="669,158.4 666.5,155.4 671.5,155.4" fill="#333"/>
<text x="663" y="156.9" font-size="8" fill="#222"  text-anchor="end" font-weight="normal" >1</text>
<path d="M687.22,68.72 L688.54,68.75 L688.54,70.25 L687.22,70.28 L686.71,71.50 L687.63,72.46 L686.56,73.53 L685.60,72.61 L684.38,73.12 L684.35,74.44 L682.85,74.44 L682.82,73.12 L681.60,72.61 L680.64,73.53 L679.57,72.46 L680.49,71.50 L679.98,70.28 L678.66,70.25 L678.66,68.75 L679.98,68.72 L680.49,67.50 L679.57,66.54 L680.64,65.47 L681.60,66.39 L682.82,65.88 L682.85,64.56 L684.35,64.56 L684.38,65.88 L685.60,66.39 L686.56,65.47 L687.63,66.54 L686.71,67.50 Z" fill="none" stroke="#aaa" stroke-width="0.9"/>
<circle cx="683.6" cy="69.5" r="1.7999999999999998" fill="none" stroke="#aaa" stroke-width="0.9"/>
<rect x="678.5" y="43.5" width="8.0" height="8.0" rx="0" fill="#f4f4f4" stroke="#ccc" stroke-width="1" />
<polyline points="679.5,47.0 681.2,49 684.5,44.8" fill="none" stroke="#ccc" stroke-width="1.2"/>
<rect x="579.5" y="232.5" width="113.0" height="166.0" rx="0" fill="#efefef" stroke="#9a9a9a" stroke-width="1" />
<text x="614" y="242.5" font-size="7" fill="#2b2d5a" stroke="#2b2d5a" stroke-width="0.15" text-anchor="start" font-weight="normal" textLength="55.6" lengthAdjust="spacingAndGlyphs" >GCLK Generator 1</text>
<line x1="537.5" y1="256.5" x2="589.2" y2="256.5" stroke="#2a2a2a" stroke-width="1.0" />
<text x="541.5" y="250.39999999999998" font-size="6.3" fill="#333" stroke="#333" stroke-width="0.15" text-anchor="start" font-weight="normal" >XOSC</text>
<line x1="537.5" y1="273.5" x2="589.2" y2="273.5" stroke="#2a2a2a" stroke-width="1.0" />
<text x="541.5" y="267.3" font-size="6.3" fill="#333" stroke="#333" stroke-width="0.15" text-anchor="start" font-weight="normal" >OSC48M</text>
<line x1="537.5" y1="291.5" x2="589.2" y2="291.5" stroke="#2a2a2a" stroke-width="1.0" />
<text x="541.5" y="285.2" font-size="6.3" fill="#333" stroke="#333" stroke-width="0.15" text-anchor="start" font-weight="normal" >FDPLL</text>
<line x1="537.5" y1="308.5" x2="589.2" y2="308.5" stroke="#2a2a2a" stroke-width="1.0" />
<text x="541.5" y="302" font-size="6.3" fill="#333" stroke="#333" stroke-width="0.15" text-anchor="start" font-weight="normal" >OSCULP32K</text>
<line x1="537.5" y1="325.5" x2="589.2" y2="325.5" stroke="#2a2a2a" stroke-width="1.0" />
<text x="541.5" y="319" font-size="6.3" fill="#333" stroke="#333" stroke-width="0.15" text-anchor="start" font-weight="normal" >OSC32K</text>
<line x1="537.5" y1="342.5" x2="589.2" y2="342.5" stroke="#2a2a2a" stroke-width="1.0" />
<text x="541.5" y="336.5" font-size="6.3" fill="#333" stroke="#333" stroke-width="0.15" text-anchor="start" font-weight="normal" >XOSC3K</text>
<line x1="537.5" y1="359.5" x2="589.2" y2="359.5" stroke="#2a2a2a" stroke-width="1.0" />
<text x="541.5" y="353.1" font-size="6.3" fill="#333" stroke="#333" stroke-width="0.15" text-anchor="start" font-weight="normal" >GCLK_IN[1]</text>
<polygon points="589.2,242 606,263.8 606,355 589.2,376" fill="#fafafa" stroke="#555" stroke-width="1.1"/>
<line x1="599.5" y1="368" x2="599.5" y2="380" stroke="#555" stroke-width="1.0" />
<rect x="582.5" y="380.5" width="58.0" height="12.0" rx="0" fill="#e2e2e2" stroke="#d4d4d4" stroke-width="1" />
<text x="585.0" y="388.8" font-size="7" fill="#222" stroke="#222" stroke-width="0.15" text-anchor="start" font-weight="normal" >OSC48M</text>
<polyline points="630.6,385.3 633.6,387.8 636.6,385.3" fill="none" stroke="#555" stroke-width="0.9"/>
<line x1="606" y1="310.5" x2="614" y2="310.5" stroke="#2a2a2a" stroke-width="1.0" />
<polygon points="622,310.5 615.5,307.1 615.5,313.9" fill="#000"/>
<rect x="622" y="295.3" width="59.200000000000045" height="30.30000000000001" rx="5" fill="#5091d0" stroke="#2f5b8a" stroke-width="1.4" />
<text x="628" y="314" font-size="8" fill="#a8cff5"  text-anchor="start" font-weight="normal" >÷</text>
<text x="634.5" y="314.5" font-size="10" fill="#b4d6f8"  text-anchor="start" font-weight="normal" >1</text>
<line x1="654.5" y1="325.6" x2="654.5" y2="340" stroke="#333" stroke-width="1.0" />
<rect x="628.5" y="340.5" width="51.0" height="13.0" rx="0" fill="#fff" stroke="#d8d8d8" stroke-width="1" />
<rect x="670.3" y="341" width="8.0" height="11" rx="0" fill="#e6e6e6" stroke="#c8c8c8" stroke-width="0.6" />
<polygon points="674.3,342.0 671.8,345.0 676.8,345.0" fill="#333"/>
<polygon points="674.3,351.0 671.8,348.0 676.8,348.0" fill="#333"/>
<text x="668.3" y="349.5" font-size="8" fill="#222"  text-anchor="end" font-weight="normal" >1</text>
<path d="M681.62,260.52 L682.94,260.55 L682.94,262.05 L681.62,262.08 L681.11,263.30 L682.03,264.26 L680.96,265.33 L680.00,264.41 L678.78,264.92 L678.75,266.24 L677.25,266.24 L677.22,264.92 L676.00,264.41 L675.04,265.33 L673.97,264.26 L674.89,263.30 L674.38,262.08 L673.06,262.05 L673.06,260.55 L674.38,260.52 L674.89,259.30 L673.97,258.34 L675.04,257.27 L676.00,258.19 L677.22,257.68 L677.25,256.36 L678.75,256.36 L678.78,257.68 L680.00,258.19 L680.96,257.27 L682.03,258.34 L681.11,259.30 Z" fill="none" stroke="#aaa" stroke-width="0.9"/>
<circle cx="678" cy="261.3" r="1.7999999999999998" fill="none" stroke="#aaa" stroke-width="0.9"/>
<rect x="677.5" y="237.5" width="9.0" height="8.0" rx="0" fill="#fff" stroke="#444" stroke-width="1" />
<polyline points="680,116 734.5,116 734.5,73.7 822,73.7" fill="none" stroke="#2a2a2a" stroke-width="1.1"/>
<text x="699" y="112.5" font-size="6.5" fill="#333" stroke="#333" stroke-width="0.15" text-anchor="start" font-weight="normal" textLength="19.7" lengthAdjust="spacingAndGlyphs" >GCLK0</text>
<text x="702" y="131" font-size="8.5" fill="#333" stroke="#333" stroke-width="0.3" text-anchor="start" font-weight="normal" textLength="56" lengthAdjust="spacingAndGlyphs" >48,000,000 Hz</text>
<line x1="681.2" y1="310.5" x2="718" y2="310.5" stroke="#2a2a2a" stroke-width="1.0" />
<polygon points="726,310.5 719.5,307.1 719.5,313.9" fill="#000"/>
<text x="701.6" y="305.5" font-size="6.5" fill="#333" stroke="#333" stroke-width="0.15" text-anchor="start" font-weight="normal" textLength="19.2" lengthAdjust="spacingAndGlyphs" >GCLK1</text>
<rect x="581.5" y="423.5" width="112.0" height="57.0" rx="0" fill="#efefef" stroke="#9a9a9a" stroke-width="1" />
<text x="599" y="436" font-size="7" fill="#2b2d5a" stroke="#2b2d5a" stroke-width="0.15" text-anchor="start" font-weight="normal" textLength="78" lengthAdjust="spacingAndGlyphs" >GCLK Generator x (x=2-8)</text>
<rect x="677.5" y="429.5" width="8.0" height="8.0" rx="0" fill="#fff" stroke="#444" stroke-width="1" />
<line x1="537.4" y1="446.5" x2="590" y2="446.5" stroke="#2a2a2a" stroke-width="1.0" />
<text x="541.7" y="440.8" font-size="6.3" fill="#333" stroke="#333" stroke-width="0.15" text-anchor="start" font-weight="normal" >XOSC</text>
<polygon points="589.6,437 606,458 606,560 589.6,580" fill="#fafafa" stroke="#555" stroke-width="1.1"/>
<rect x="691.5" y="426.5" width="30.0" height="24.0" rx="0" fill="#f7f7f7" stroke="#e4e4e4" stroke-width="1" />
<text x="694.7" y="437" font-size="7.5" fill="#222" stroke="#222" stroke-width="0.15" text-anchor="start" font-weight="normal" textLength="22.5" lengthAdjust="spacingAndGlyphs" >GCLK 2</text>
<text x="693.3" y="449" font-size="7.5" fill="#222" stroke="#222" stroke-width="0.15" text-anchor="start" font-weight="normal" textLength="22.7" lengthAdjust="spacingAndGlyphs" >GCLK 3</text>
<rect x="797.5" y="38.5" width="43.0" height="85.0" rx="0" fill="#efefef" stroke="#9a9a9a" stroke-width="1" />
<rect x="796.5" y="157.5" width="44.0" height="175.0" rx="0" fill="#efefef" stroke="#9a9a9a" stroke-width="1" />
<polygon points="808.6,165.7 830,196 830,296 808.6,325.4" fill="#fafafa" stroke="#555" stroke-width="1.1"/>
<text x="813.5" y="168" font-size="6.5" fill="#333" stroke="#333" stroke-width="0.15" text-anchor="start" font-weight="normal" >Pe</text>
<line x1="757.3" y1="175.5" x2="808.6" y2="175.5" stroke="#2a2a2a" stroke-width="1.0" />
<text x="759" y="172" font-size="6.3" fill="#333" stroke="#333" stroke-width="0.15" text-anchor="start" font-weight="normal" >GCLK0</text>
<line x1="757.3" y1="191.5" x2="808.6" y2="191.5" stroke="#2a2a2a" stroke-width="1.0" />
<text x="759" y="188.2" font-size="6.3" fill="#333" stroke="#333" stroke-width="0.15" text-anchor="start" font-weight="normal" >GCLK1</text>
<line x1="757.3" y1="209.5" x2="808.6" y2="209.5" stroke="#2a2a2a" stroke-width="1.0" />
<text x="759" y="206" font-size="6.3" fill="#333" stroke="#333" stroke-width="0.15" text-anchor="start" font-weight="normal" >GCLK2</text>
<line x1="757.3" y1="225.5" x2="808.6" y2="225.5" stroke="#2a2a2a" stroke-width="1.0" />
<text x="759" y="222.7" font-size="6.3" fill="#333" stroke="#333" stroke-width="0.15" text-anchor="start" font-weight="normal" >GCLK3</text>
<line x1="757.3" y1="243.5" x2="808.6" y2="243.5" stroke="#2a2a2a" stroke-width="1.0" />
<text x="759" y="240" font-size="6.3" fill="#333" stroke="#333" stroke-width="0.15" text-anchor="start" font-weight="normal" >GCLK4</text>
<line x1="757.3" y1="260.5" x2="808.6" y2="260.5" stroke="#2a2a2a" stroke-width="1.0" />
<text x="759" y="257.5" font-size="6.3" fill="#333" stroke="#333" stroke-width="0.15" text-anchor="start" font-weight="normal" >GCLK5</text>
<line x1="757.3" y1="277.5" x2="808.6" y2="277.5" stroke="#2a2a2a" stroke-width="1.0" />
<text x="759" y="274.2" font-size="6.3" fill="#333" stroke="#333" stroke-width="0.15" text-anchor="start" font-weight="normal" >GCLK6</text>
<line x1="757.3" y1="294.5" x2="808.6" y2="294.5" stroke="#2a2a2a" stroke-width="1.0" />
<text x="759" y="291.4" font-size="6.3" fill="#333" stroke="#333" stroke-width="0.15" text-anchor="start" font-weight="normal" >GCLK7</text>
<line x1="757.3" y1="312.5" x2="808.6" y2="312.5" stroke="#2a2a2a" stroke-width="1.0" />
<text x="759" y="309.2" font-size="6.3" fill="#333" stroke="#333" stroke-width="0.15" text-anchor="start" font-weight="normal" >GCLK8</text>
<rect x="795.5" y="374.5" width="45.0" height="106.0" rx="0" fill="#efefef" stroke="#9a9a9a" stroke-width="1" />
<line x1="752" y1="389.5" x2="822" y2="389.5" stroke="#2a2a2a" stroke-width="1.0" />
<text x="752.5" y="384.6" font-size="6.3" fill="#333" stroke="#333" stroke-width="0.15" text-anchor="start" font-weight="normal" >OSCULP1K</text>
<line x1="752" y1="407.5" x2="822" y2="407.5" stroke="#2a2a2a" stroke-width="1.0" />
<text x="752.5" y="402.7" font-size="6.3" fill="#333" stroke="#333" stroke-width="0.15" text-anchor="start" font-weight="normal" >OSCULP32K</text>
<line x1="752" y1="426.5" x2="822" y2="426.5" stroke="#2a2a2a" stroke-width="1.0" />
<text x="752.5" y="421" font-size="6.3" fill="#333" stroke="#333" stroke-width="0.15" text-anchor="start" font-weight="normal" >OSC1K</text>
<line x1="752" y1="443.5" x2="822" y2="443.5" stroke="#2a2a2a" stroke-width="1.0" />
<text x="752.5" y="438.5" font-size="6.3" fill="#333" stroke="#333" stroke-width="0.15" text-anchor="start" font-weight="normal" >OSC32K</text>
</g>
<rect x="821" y="35" width="11" height="416" fill="#fafafa"/>
<rect x="821.5" y="46.5" width="10.0" height="268.0" fill="#c9c9c9"/>
<polyline points="823.8,42.8 826.3,40.3 828.8,42.8" fill="none" stroke="#222" stroke-width="1"/>
<polyline points="823.8,443 826.3,445.5 828.8,443" fill="none" stroke="#222" stroke-width="1"/>
<rect x="261" y="451" width="571" height="10" fill="#f0f0f0"/>
<rect x="406" y="451" width="281" height="9" fill="#c9c9c9"/>
<polyline points="268,453.5 265.5,456 268,458.5" fill="none" stroke="#222" stroke-width="1"/>
<polyline points="814,453 816.5,455.5 814,458" fill="none" stroke="#222" stroke-width="1"/>
<rect x="833" y="33" width="15" height="428" fill="#ededed"/>
<text x="838.8" y="37.5" font-size="7.4" fill="#333" stroke="#333" stroke-width="0.15" text-anchor="start" font-weight="normal" textLength="71.5" lengthAdjust="spacingAndGlyphs" transform="rotate(90 838.8 37.5)">Configuration Options</text>
<text x="838.8" y="119" font-size="7.4" fill="#333" transform="rotate(90 838.8 119)" textLength="15" lengthAdjust="spacingAndGlyphs">Help</text>
</svg>
</body></html>
